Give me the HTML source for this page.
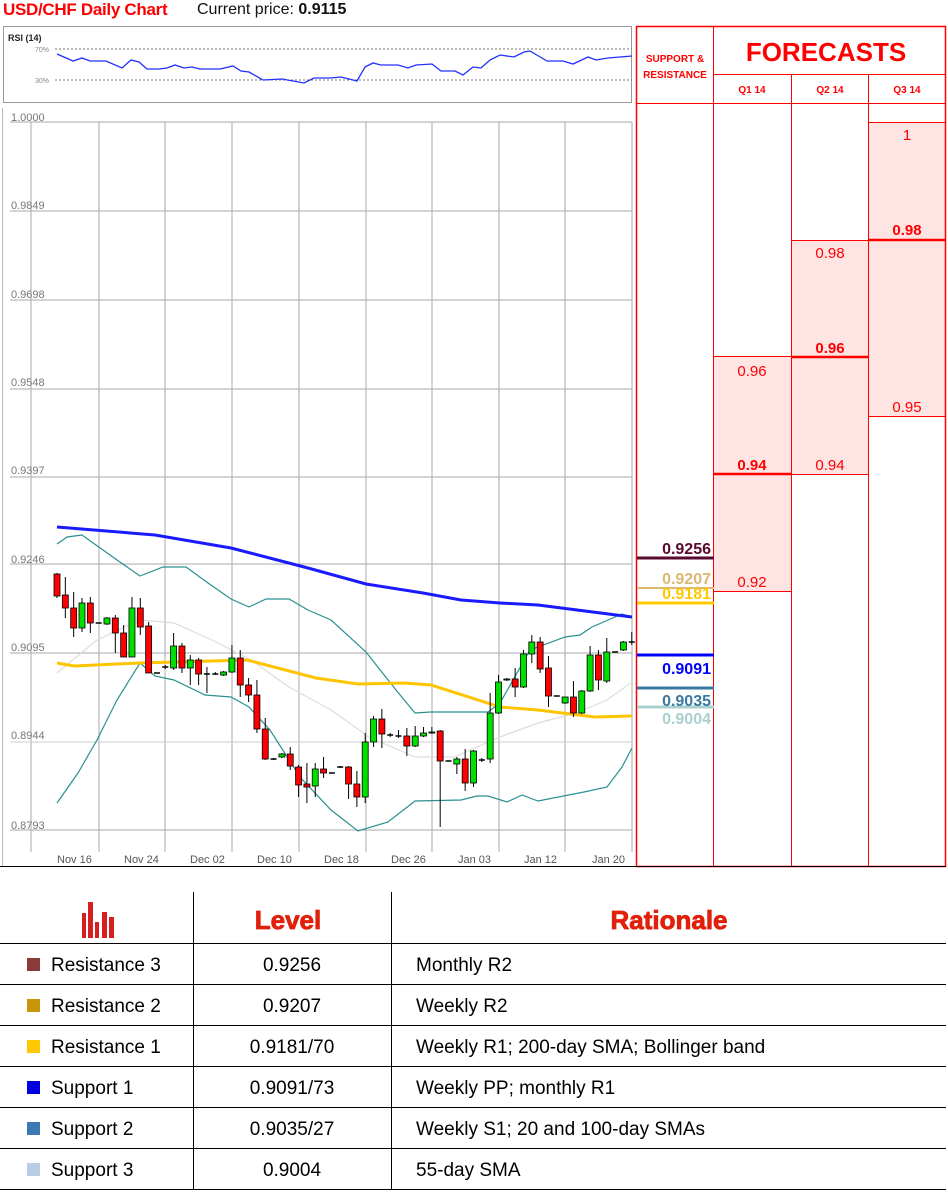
<!DOCTYPE html>
<html><head><meta charset="utf-8"><style>
body{margin:0;width:948px;height:1193px;background:#fff;position:relative;overflow:hidden;font-family:"Liberation Sans",sans-serif}
.a{position:absolute}
</style></head><body>
<div class="a" style="left:3px;top:0;font-size:17px;font-weight:bold;color:#f00;letter-spacing:-0.3px">USD/CHF Daily Chart</div>
<div class="a" style="left:197px;top:1px;font-size:16px;color:#111">Current price: <b>0.9115</b></div>

<svg class="a" style="left:0;top:0" width="948" height="870">
<!-- RSI box -->
<rect x="3.5" y="26.5" width="628" height="76" fill="#fff" stroke="#999"/>
<text x="8" y="41" font-size="9" font-weight="bold" font-family="Liberation Sans" fill="#222">RSI (14)</text>
<text x="35" y="52" font-size="7" fill="#888" font-family="Liberation Sans">70%</text>
<text x="35" y="83" font-size="7" fill="#888" font-family="Liberation Sans">30%</text>
<line x1="55" y1="49" x2="632" y2="49" stroke="#777" stroke-dasharray="2,2"/>
<line x1="55" y1="80" x2="632" y2="80" stroke="#777" stroke-dasharray="2,2"/>
<polyline fill="none" stroke="#2030ff" stroke-width="1.3" points="57,54 73,61 82,58 90,61 106,61 122,68 131,60 139,62 147,69 159,69 167,68 175,65 184,68 192,67 200,69 220,69 233,66 241,71 249,72 263,80 282,79 304,83 314,78 330,78 341,77 357,81 365,67 373,63 381,65 398,65 408,68 416,65 432,64 441,71 455,71 463,75 473,67 481,68 490,60 500,55 514,57 524,52 530,51 547,61 563,61 573,64 588,57 596,60 608,58 620,57 632,56"/>
<!-- main chart box -->
<line x1="2.5" y1="108" x2="2.5" y2="866" stroke="#bbb"/>
<g stroke="#aaa" stroke-width="1">
<line x1="31" y1="122" x2="31" y2="852"/><line x1="99" y1="122" x2="99" y2="852"/><line x1="165" y1="122" x2="165" y2="852"/><line x1="232" y1="122" x2="232" y2="852"/><line x1="299" y1="122" x2="299" y2="852"/><line x1="366" y1="122" x2="366" y2="852"/><line x1="432" y1="122" x2="432" y2="852"/><line x1="499" y1="122" x2="499" y2="852"/><line x1="565" y1="122" x2="565" y2="852"/><line x1="632" y1="122" x2="632" y2="852"/>
<line x1="10" y1="122" x2="632" y2="122"/><line x1="10" y1="211" x2="632" y2="211"/><line x1="10" y1="300" x2="632" y2="300"/><line x1="10" y1="389" x2="632" y2="389"/><line x1="10" y1="477" x2="632" y2="477"/><line x1="10" y1="564" x2="632" y2="564"/><line x1="10" y1="653" x2="632" y2="653"/><line x1="10" y1="742" x2="632" y2="742" stroke="#ccc"/><line x1="10" y1="830" x2="632" y2="830"/>
</g>
<g font-family="Liberation Sans" font-size="11" fill="#777">
<text x="11" y="121">1.0000</text><text x="11" y="209">0.9849</text><text x="11" y="298">0.9698</text><text x="11" y="386">0.9548</text><text x="11" y="474">0.9397</text><text x="11" y="563">0.9246</text><text x="11" y="651">0.9095</text><text x="11" y="739">0.8944</text><text x="11" y="829">0.8793</text>
</g>
<g font-family="Liberation Sans" font-size="11" fill="#555">
<text x="57" y="863">Nov 16</text><text x="124" y="863">Nov 24</text><text x="190" y="863">Dec 02</text><text x="257" y="863">Dec 10</text><text x="324" y="863">Dec 18</text><text x="391" y="863">Dec 26</text><text x="458" y="863">Jan 03</text><text x="524" y="863">Jan 12</text><text x="592" y="863">Jan 20</text>
</g>
<polyline fill="none" stroke="#ddd" stroke-width="1.2" points="57,673 97,640 140,620 174,623 212,640 251,660 289,687 331,710 369,737 415,757 454,757 500,737 538,723 576,713 607,700 632,682"/>
<polyline fill="none" stroke="#2a9090" stroke-width="1.2" points="57,544 67,537 82,535 117,560 140,576 163,567 186,567 208,583 231,599 249,607 266,599 289,599 308,610 331,620 366,652 396,690 415,713 431,712 488,712 500,703 530,650 565,637 580,635 592,627 622,614 632,617"/>
<polyline fill="none" stroke="#2a9090" stroke-width="1.2" points="57,803 78,773 97,740 117,700 140,663 155,676 174,680 205,695 231,697 249,707 270,730 300,777 331,810 358,831 388,822 415,801 461,800 477,796 488,796 507,802 522,795 538,801 584,792 607,787 622,767 632,748"/>
<polyline fill="none" stroke="#ffc400" stroke-width="3" points="57,663 74,666 140,663 247,660 316,678 358,684 404,683 431,685 500,707 538,710 595,717 632,716"/>
<polyline fill="none" stroke="#1a1aff" stroke-width="3" points="57,527 155,535 231,548 308,568 366,584 423,593 461,600 500,603 538,605 632,617"/>
<g id="c"></g>
<!-- right panel -->
<rect x="869" y="122" width="77" height="294" fill="#ffe4e4"/>
<rect x="792" y="240" width="76" height="234" fill="#ffe4e4"/>
<rect x="714" y="356" width="77" height="235" fill="#ffe4e4"/>
<g stroke="#f00" stroke-width="1">
<rect x="636.5" y="26.5" width="309" height="840" fill="none" stroke-width="1.5"/>
<line x1="713.5" y1="26" x2="713.5" y2="866"/><line x1="791.5" y1="75" x2="791.5" y2="866"/><line x1="868.5" y1="75" x2="868.5" y2="866"/>
<line x1="713" y1="74.5" x2="946" y2="74.5"/><line x1="636" y1="103.5" x2="946" y2="103.5"/>
<line x1="869" y1="122.5" x2="946" y2="122.5"/><line x1="869" y1="240" x2="946" y2="240" stroke-width="2.5"/><line x1="869" y1="416.5" x2="946" y2="416.5"/>
<line x1="792" y1="240.5" x2="868" y2="240.5"/><line x1="792" y1="357" x2="868" y2="357" stroke-width="2.5"/><line x1="792" y1="474.5" x2="868" y2="474.5"/>
<line x1="714" y1="356.5" x2="791" y2="356.5"/><line x1="714" y1="474" x2="791" y2="474" stroke-width="2.5"/><line x1="714" y1="591.5" x2="791" y2="591.5"/>
</g>
<g font-family="Liberation Sans" fill="#f00" text-anchor="middle">
<text x="675" y="62" font-size="10" font-weight="bold">SUPPORT &amp;</text>
<text x="675" y="78" font-size="10" font-weight="bold">RESISTANCE</text>
<text x="826" y="61" font-size="26" font-weight="bold">FORECASTS</text>
<text x="752" y="93" font-size="10" font-weight="bold">Q1 14</text><text x="830" y="93" font-size="10" font-weight="bold">Q2 14</text><text x="907" y="93" font-size="10" font-weight="bold">Q3 14</text>
<text x="907" y="140" font-size="15">1</text><text x="907" y="235" font-size="15" font-weight="bold">0.98</text><text x="907" y="412" font-size="15">0.95</text>
<text x="830" y="258" font-size="15">0.98</text><text x="830" y="353" font-size="15" font-weight="bold">0.96</text><text x="830" y="470" font-size="15">0.94</text>
<text x="752" y="376" font-size="15">0.96</text><text x="752" y="470" font-size="15" font-weight="bold">0.94</text><text x="752" y="587" font-size="15">0.92</text>
</g>
<line x1="637" y1="558" x2="714" y2="558" stroke="#5a0a30" stroke-width="3"/>
<line x1="637" y1="588" x2="714" y2="588" stroke="#dcb870" stroke-width="2"/>
<line x1="637" y1="603" x2="714" y2="603" stroke="#ffc800" stroke-width="3"/>
<line x1="637" y1="655" x2="714" y2="655" stroke="#0000ff" stroke-width="3"/>
<line x1="637" y1="688" x2="714" y2="688" stroke="#3a7aa0" stroke-width="3"/>
<line x1="637" y1="707" x2="714" y2="707" stroke="#a8d0d0" stroke-width="3"/>
<g font-family="Liberation Sans" font-size="16" font-weight="bold" text-anchor="end">
<text x="711" y="554" fill="#5a0a30">0.9256</text><text x="711" y="584" fill="#dcb870">0.9207</text><text x="711" y="599" fill="#ffc800">0.9181</text>
<text x="711" y="674" fill="#0000ff">0.9091</text><text x="711" y="706" fill="#3a7aa0">0.9035</text><text x="711" y="724" fill="#a8d0d0">0.9004</text>
</g>
<line x1="0" y1="866.5" x2="946" y2="866.5" stroke="#000"/>
</svg>

<svg class="a" style="left:0;top:870px" width="948" height="323">
<g font-family="Liberation Sans">
<g fill="#d62020"><rect x="82" y="43" width="4" height="25"/><rect x="88" y="32" width="5" height="36"/><rect x="95" y="52" width="4" height="16"/><rect x="102" y="42" width="5" height="26"/><rect x="109" y="47" width="5" height="21"/></g>
<text x="288" y="59" font-size="26" font-weight="bold" fill="#e0200a" text-anchor="middle" stroke="#e0200a" stroke-width="0.8">Level</text>
<text x="669" y="59" font-size="26" font-weight="bold" fill="#e0200a" text-anchor="middle" stroke="#e0200a" stroke-width="0.8">Rationale</text>
<g stroke="#000" stroke-width="1">
<line x1="193.5" y1="22" x2="193.5" y2="320"/><line x1="391.5" y1="22" x2="391.5" y2="320"/>
<line x1="0" y1="73.5" x2="946" y2="73.5"/><line x1="0" y1="114.5" x2="946" y2="114.5"/><line x1="0" y1="155.5" x2="946" y2="155.5"/><line x1="0" y1="196.5" x2="946" y2="196.5"/><line x1="0" y1="237.5" x2="946" y2="237.5"/><line x1="0" y1="278.5" x2="946" y2="278.5"/><line x1="0" y1="319.5" x2="946" y2="319.5"/>
</g>
<g font-size="19" fill="#000">
<rect x="27" y="88" width="13" height="13" fill="#8b3a3a"/><text x="51" y="101">Resistance 3</text><text x="292" y="101" text-anchor="middle">0.9256</text><text x="416" y="101">Monthly R2</text>
<rect x="27" y="129" width="13" height="13" fill="#c8960a"/><text x="51" y="142">Resistance 2</text><text x="292" y="142" text-anchor="middle">0.9207</text><text x="416" y="142">Weekly R2</text>
<rect x="27" y="170" width="13" height="13" fill="#ffc800"/><text x="51" y="183">Resistance 1</text><text x="292" y="183" text-anchor="middle">0.9181/70</text><text x="416" y="183">Weekly R1; 200-day SMA; Bollinger band</text>
<rect x="27" y="211" width="13" height="13" fill="#0000e0"/><text x="51" y="224">Support 1</text><text x="292" y="224" text-anchor="middle">0.9091/73</text><text x="416" y="224">Weekly PP; monthly R1</text>
<rect x="27" y="252" width="13" height="13" fill="#3c78b4"/><text x="51" y="265">Support 2</text><text x="292" y="265" text-anchor="middle">0.9035/27</text><text x="416" y="265">Weekly S1; 20 and 100-day SMAs</text>
<rect x="27" y="293" width="13" height="13" fill="#b8cce4"/><text x="51" y="306">Support 3</text><text x="292" y="306" text-anchor="middle">0.9004</text><text x="416" y="306">55-day SMA</text>
</g>
</g>
</svg>
<script>
var d=[[574,596,573,598,'r'],[595,608,577,618,'r'],[608,628,592,637,'r'],[603,628,598,632,'g'],[603,623,597,633,'r'],[623,623,623,623,'d'],[618,624,617,625,'g'],[618,633,615,653,'r'],[633,657,625,657,'r'],[608,657,597,657,'g'],[608,627,598,635,'r'],[626,673,622,673,'r'],[673,673,673,673,'d'],[667,667,665,669,'d'],[646,668,633,670,'g'],[646,668,643,673,'r'],[660,668,655,685,'g'],[660,674,658,685,'r'],[674,674,667,693,'d'],[674,674,672,675,'d'],[672,675,671,676,'g'],[658,672,645,673,'g'],[658,685,650,697,'r'],[685,695,678,702,'r'],[695,729,680,733,'r'],[729,759,718,760,'r'],[759,759,758,760,'d'],[754,757,753,758,'g'],[754,766,747,770,'r'],[767,785,765,797,'r'],[784,787,763,803,'r'],[769,786,763,797,'g'],[769,773,757,778,'r'],[773,773,773,773,'d'],[767,767,766,768,'d'],[767,784,766,799,'r'],[784,797,771,807,'r'],[742,797,733,803,'g'],[719,742,716,747,'g'],[719,734,709,748,'r'],[735,735,733,737,'d'],[736,736,730,738,'d'],[736,746,728,756,'r'],[736,746,726,747,'g'],[733,736,727,737,'g'],[732,733,727,734,'g'],[731,761,730,827,'r'],[761,761,761,761,'d'],[759,764,757,774,'g'],[759,783,749,791,'r'],[751,783,750,787,'g'],[760,760,758,762,'d'],[713,759,693,763,'g'],[682,713,675,714,'g'],[679,680,678,681,'g'],[679,687,668,697,'r'],[654,687,650,688,'g'],[642,654,635,663,'g'],[642,669,637,673,'r'],[668,696,656,707,'r'],[696,696,696,696,'d'],[697,703,697,704,'g'],[697,713,681,717,'r'],[691,713,690,714,'g'],[655,691,646,692,'g'],[655,680,650,690,'r'],[652,681,638,683,'g'],[652,652,652,652,'d'],[642,650,641,651,'g'],[642,642,632,645,'d']];
var s='';for(var i=0;i<d.length;i++){var x=57+i*8.33,c=d[i];s+='<line x1="'+x+'" y1="'+c[2]+'" x2="'+x+'" y2="'+c[3]+'" stroke="#000"/>';if(c[4]=='d'){s+='<line x1="'+(x-3)+'" y1="'+c[0]+'" x2="'+(x+3)+'" y2="'+c[0]+'" stroke="#000" stroke-width="1.5"/>';}else{s+='<rect x="'+(x-3)+'" y="'+c[0]+'" width="6" height="'+Math.max(1,c[1]-c[0])+'" fill="'+(c[4]=='r'?'#ff0000':'#00e000')+'" stroke="#000" stroke-width="0.8"/>';}}
document.getElementById('c').innerHTML=s;
</script>
</body></html>
